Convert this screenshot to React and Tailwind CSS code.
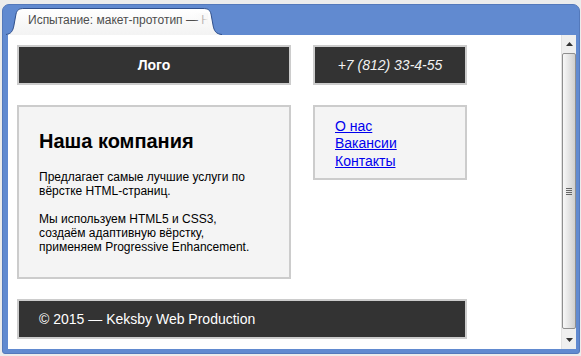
export default function App() {
  return (
    <div className="w-[581px] h-[356px] bg-[#ececec] pt-[4px] pl-[2px] pr-[1px] pb-[2px] flex font-['Liberation_Sans',Arial,sans-serif]">
      <div className="flex-1 flex flex-col bg-[#618ad0] rounded-t-[7px] rounded-b-[3px] border border-[#5479bb]">
        {/* tab row */}
        <div className="h-[30px] pl-[3px] pt-[2px] flex">
          <div className="relative w-[216px] h-[28px]">
            <svg className="absolute inset-0" width="216" height="28" viewBox="0 0 216 28">
              <defs>
                <linearGradient id="tabg" x1="0" y1="0" x2="0" y2="1">
                  <stop offset="0" stopColor="#ffffff" />
                  <stop offset="1" stopColor="#f3f3f3" />
                </linearGradient>
              </defs>
              <path d="M0,28 C5,27 7,24 8,18 L10,7 C11,3 13,1.5 18,1.5 L197,1.5 C202,1.5 204,3 205,7 L207,18 C208,24 210,27 216,28 Z" fill="url(#tabg)" />
              <path d="M0,27.5 C5,27 7,24 8,18 L10,7 C11,3 13,1.5 18,1.5 L197,1.5 C202,1.5 204,3 205,7 L207,18 C208,24 210,27 216,27.5" fill="none" stroke="#30508c" strokeWidth="1" />
            </svg>
            <div className="relative ml-[22px] mt-[6px] w-[180px] overflow-hidden whitespace-nowrap text-[12px] leading-[14px] text-[#4d4d4d]">
              Испытание: макет-прототип — HTML
              <div className="absolute right-0 top-0 h-full w-[14px] bg-gradient-to-r from-transparent to-[#f8f8f8]" />
            </div>
          </div>
        </div>
        {/* content */}
        <div className="flex-1 flex ml-[5px] mr-[3px] mb-[4px]">
          <div className="flex-1 bg-white pl-[9px] pt-[10px]">
            <div className="flex gap-[22px]">
              <div className="w-[274px] h-[40px] bg-[#333333] border-2 border-[#cccccc] flex items-center justify-center text-white text-[14px] font-bold">
                Лого
              </div>
              <div className="w-[154px] h-[40px] bg-[#333333] border-2 border-[#cccccc] flex items-center justify-center text-[#f2f2f2] text-[14px] italic">
                +7 (812) 33-4-55
              </div>
            </div>
            <div className="flex gap-[22px] mt-[20px] items-start">
              <div className="w-[274px] h-[174px] bg-[#f4f4f4] border-2 border-[#cccccc] pl-[20px] pt-[23px] text-black">
                <h2 className="text-[20px] leading-[23px] font-bold">Наша компания</h2>
                <p className="mt-[17px] text-[12px] leading-[14px]">
                  Предлагает самые лучшие услуги по<br />вёрстке HTML-страниц.
                </p>
                <p className="mt-[14px] text-[12px] leading-[14px]">
                  Мы используем HTML5 и CSS3,<br />создаём адаптивную вёрстку,<br />применяем Progressive Enhancement.
                </p>
              </div>
              <div className="w-[154px] h-[75px] bg-[#f4f4f4] border-2 border-[#cccccc] pl-[20px] pt-[11px]">
                <ul className="text-[14px] leading-[17.4px]">
                  <li><a href="#" className="text-[#0000ee] underline">О нас</a></li>
                  <li><a href="#" className="text-[#0000ee] underline">Вакансии</a></li>
                  <li><a href="#" className="text-[#0000ee] underline">Контакты</a></li>
                </ul>
              </div>
            </div>
            <div className="mt-[20px] w-[450px] h-[40px] bg-[#333333] border-2 border-[#cccccc] flex items-center pl-[20px] text-white text-[14px]">
              © 2015 — Keksby Web Production
            </div>
          </div>
          {/* scrollbar */}
          <div className="w-[15px] flex flex-col bg-[#efefef] border-l border-[#e2e2e2]">
            <div className="h-[18px] flex items-center justify-center">
              <svg width="7" height="4" viewBox="0 0 7 4"><path d="M0,4 L3.5,0 L7,4 Z" fill="#333" /></svg>
            </div>
            <div className="flex-1 rounded-[2px] border border-[#8f8f8f] bg-gradient-to-r from-[#f8f8f8] via-[#e4e4e4] to-[#cfcfcf] flex items-center justify-center">
              <div className="flex flex-col gap-[1px]">
                <div className="w-[6px] h-[1px] bg-[#666]" />
                <div className="w-[6px] h-[1px] bg-[#666]" />
                <div className="w-[6px] h-[1px] bg-[#666]" />
                <div className="w-[6px] h-[1px] bg-[#666]" />
              </div>
            </div>
            <div className="h-[18px] mt-[2px] flex items-center justify-center">
              <svg width="7" height="4" viewBox="0 0 7 4"><path d="M0,0 L7,0 L3.5,4 Z" fill="#333" /></svg>
            </div>
          </div>
        </div>
      </div>
    </div>
  );
}
